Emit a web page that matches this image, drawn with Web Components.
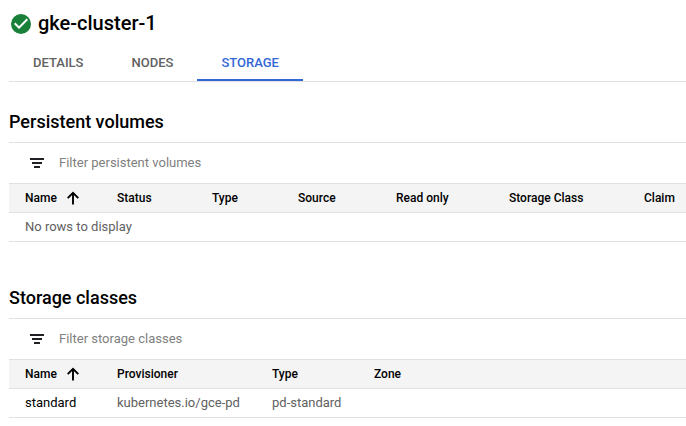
<!DOCTYPE html>
<html lang="en"><head><meta charset="utf-8"><title>gke-cluster-1</title>
<style>body{margin:0;background:#fff;font-family:Roboto,sans-serif;color:#000}</style></head>
<body>
<cluster-page></cluster-page>
<script>
const define=(name,html,setup)=>customElements.define(name,class extends HTMLElement{
  connectedCallback(){
    if(this.shadowRoot)return;
    this.attachShadow({mode:'open'}).innerHTML=html;
    if(setup)setup(this,this.shadowRoot);
  }
});
define('status-icon',`<style>:host{display:block;width:20px;height:20px;margin-top:2px}svg{display:block}</style>
<svg width="20" height="20" viewBox="0 0 20 20"><circle cx="10" cy="10" r="10" fill="#188038"/><path d="M8 15L3 10l1.41-1.41L8 12.17l7.59-7.59L17 6z" fill="#fff"/></svg>`);
define('filter-icon',`<style>:host{display:block;width:14px;height:10px}svg{display:block}</style>
<svg width="14" height="10" viewBox="0 0 14 10" fill="#202124"><path d="M0 0h14v2H0zM2 4h10v2H2zM4 8h6v2H4z"/></svg>`);
define('sort-icon',`<style>:host{display:block;width:12px;height:14px;margin-top:-1px}svg{display:block}</style>
<svg width="12" height="14" viewBox="0 0 12 14"><path d="M6 13.5V2M.7 7.1L6 1.8l5.3 5.3" fill="none" stroke="#000" stroke-width="1.9"/></svg>`);
define('nav-tab',`<style>:host{display:block;box-sizing:border-box;height:35px;padding:0 24px;font:500 13px/34px Roboto,sans-serif;color:#616161;white-space:nowrap}
:host([active]){color:#3367d6;border-bottom:2px solid #3367d6}</style><slot></slot>`);
define('data-cell',`<style>:host{display:flex;align-items:center;gap:10px;white-space:nowrap}</style><slot></slot>`);
define('data-row',`<style>:host{display:grid;grid-template-columns:var(--cols);box-sizing:border-box;height:29px;padding-left:16px;border-bottom:1px solid #e0e0e0;font:400 13px/28px Roboto,sans-serif;color:#616161}
:host([head]){height:30px;background:#f4f4f4;border-top:1px solid #e0e0e0;color:#000;font-weight:500;font-size:12px}</style><slot></slot>`);
define('data-section',`<style>:host{display:block}h2{box-sizing:border-box;margin:0;padding-top:1px;font:500 18px/24px Roboto,sans-serif;height:33px}
.f{display:flex;align-items:center;height:40px;border-top:1px solid #e0e0e0;padding-left:21px;gap:15px;font-size:13px;color:#808080}span{margin-top:-2px}</style>
<h2></h2><div class="f"><filter-icon></filter-icon><span></span></div><slot></slot>`,(h,s)=>{s.querySelector('h2').textContent=h.getAttribute('heading');s.querySelector('span').textContent=h.getAttribute('filter')});
define('cluster-page',`<style>:host{display:block;padding-left:9px}
header{display:flex;align-items:center;height:46px;padding-left:2px;gap:7px}h1{margin:0;font:500 20px/24px Roboto,sans-serif}
nav{display:flex;height:35px;border-bottom:1px solid #e0e0e0;margin-bottom:27px}
.pv{--cols:92px 95px 86px 98px 113px 135px 1fr;margin-bottom:43px}.sc{--cols:92px 155px 102px 1fr}.name{color:#000}</style>
<header><status-icon></status-icon><h1>gke-cluster-1</h1></header>
<nav><nav-tab>DETAILS</nav-tab><nav-tab>NODES</nav-tab><nav-tab active>STORAGE</nav-tab></nav>
<data-section class="pv" heading="Persistent volumes" filter="Filter persistent volumes">
<data-row head><data-cell>Name<sort-icon></sort-icon></data-cell><data-cell>Status</data-cell><data-cell>Type</data-cell><data-cell>Source</data-cell><data-cell>Read only</data-cell><data-cell>Storage Class</data-cell><data-cell>Claim</data-cell></data-row>
<data-row><data-cell>No rows to display</data-cell></data-row></data-section>
<data-section class="sc" heading="Storage classes" filter="Filter storage classes">
<data-row head><data-cell>Name<sort-icon></sort-icon></data-cell><data-cell>Provisioner</data-cell><data-cell>Type</data-cell><data-cell>Zone</data-cell></data-row>
<data-row><data-cell class="name">standard</data-cell><data-cell>kubernetes.io/gce-pd</data-cell><data-cell>pd-standard</data-cell></data-row></data-section>`);
</script></body></html>
